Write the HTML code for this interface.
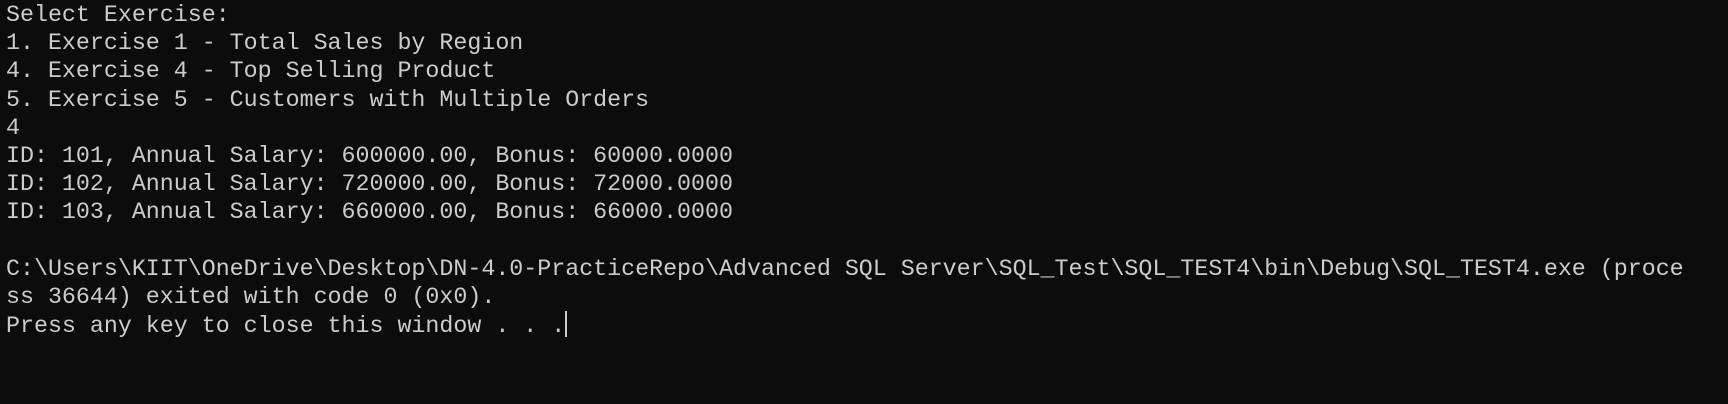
<!DOCTYPE html>
<html><head><meta charset="utf-8"><style>
html,body{margin:0;padding:0;background:#0c0c0c;width:1728px;height:404px;overflow:hidden}
pre{margin:0;position:absolute;left:6px;top:1px;font-family:"Liberation Mono",monospace;font-size:23.3px;line-height:28.2px;color:#cccccc;white-space:pre}
.cur{display:inline-block;width:2px;height:26px;background:#cccccc;vertical-align:-5px}
</style></head><body><pre>Select Exercise:
1. Exercise 1 - Total Sales by Region
4. Exercise 4 - Top Selling Product
5. Exercise 5 - Customers with Multiple Orders
4
ID: 101, Annual Salary: 600000.00, Bonus: 60000.0000
ID: 102, Annual Salary: 720000.00, Bonus: 72000.0000
ID: 103, Annual Salary: 660000.00, Bonus: 66000.0000

C:\Users\KIIT\OneDrive\Desktop\DN-4.0-PracticeRepo\Advanced SQL Server\SQL_Test\SQL_TEST4\bin\Debug\SQL_TEST4.exe (proce
ss 36644) exited with code 0 (0x0).
Press any key to close this window . . .<span class="cur"></span></pre></body></html>
